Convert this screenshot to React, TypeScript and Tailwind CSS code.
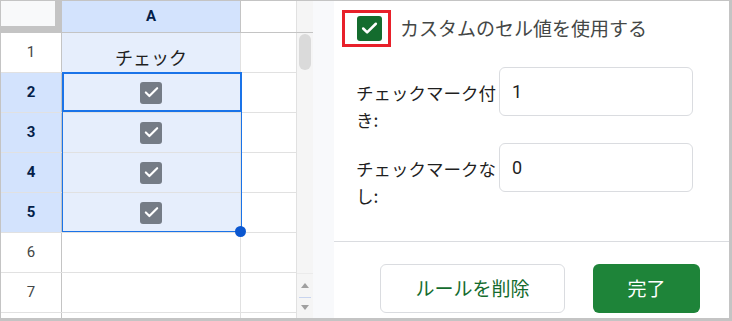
import { Check } from 'lucide-react';

const jp = { fontFamily: '"Noto Sans CJK JP", "Liberation Sans", sans-serif' };

function GridCheck() {
  return (
    <div className="w-[22px] h-[22px] rounded-[3px] bg-[#757c86] flex items-center justify-center">
      <Check className="w-[17px] h-[17px] text-white" strokeWidth={3} />
    </div>
  );
}

function SheetRow({ n, selected, children }: { n: number; selected?: boolean; children?: React.ReactNode }) {
  const inRange = n <= 5;
  return (
    <div className="flex h-[40px] border-b border-[#e1e1e1]">
      <div
        className={`w-[61px] shrink-0 border-r border-[#c4c4c4] flex items-center justify-center text-[15px] ${
          selected ? 'bg-[#d3e3fd] text-[#041e49] font-bold' : 'bg-white text-[#444746]'
        }`}
        style={{ fontFamily: 'Roboto, "Liberation Sans", sans-serif' }}
      >
        {n < 8 ? n : null}
      </div>
      <div
        className={`w-[179px] shrink-0 border-r border-[#e1e1e1] flex justify-center ${
          inRange ? 'bg-[#e6eefc]' : 'bg-white'
        } ${n === 1 ? 'items-end pb-[2px]' : 'items-center'}`}
      >
        {children}
      </div>
      <div className="w-[56px] shrink-0 border-r border-[#e1e1e1] bg-white" />
    </div>
  );
}

function Sheet() {
  return (
    <div className="w-[296px] shrink-0 flex flex-col overflow-hidden">
      <div className="flex h-[32px] shrink-0 border-b border-[#c4c4c4]">
        <div className="w-[61px] shrink-0 bg-[#c4c4c4]">
          <div className="w-[54px] h-[25px] bg-[#f8f9fa]" />
        </div>
        <div
          className="w-[179px] shrink-0 bg-[#d3e3fd] border-r border-[#c4c4c4] flex items-center justify-center text-[15px] font-bold text-[#041e49]"
          style={{ fontFamily: 'Roboto, "Liberation Sans", sans-serif' }}
        >
          A
        </div>
        <div className="w-[56px] shrink-0 bg-white border-r border-[#e1e1e1]" />
      </div>
      <div className="relative">
        <SheetRow n={1}>
          <span className="text-[18px] text-[#1f1f1f] leading-[26px]" style={jp}>
            チェック
          </span>
        </SheetRow>
        <SheetRow n={2} selected>
          <GridCheck />
        </SheetRow>
        <SheetRow n={3} selected>
          <GridCheck />
        </SheetRow>
        <SheetRow n={4} selected>
          <GridCheck />
        </SheetRow>
        <SheetRow n={5} selected>
          <GridCheck />
        </SheetRow>
        <SheetRow n={6} />
        <SheetRow n={7} />
        <SheetRow n={8} />
        {/* selection range + active cell */}
        <div className="absolute left-[61px] top-[39px] w-[180px] h-[160px] border border-[#1a73e8] pointer-events-none" />
        <div className="absolute left-[61px] top-[39px] w-[180px] h-[40px] border-2 border-[#1a73e8] pointer-events-none" />
        <div className="absolute left-[234px] top-[193px] w-[11px] h-[11px] rounded-full bg-[#0b57d0]" />
      </div>
    </div>
  );
}

function Scrollbar() {
  return (
    <div className="w-[16px] shrink-0 bg-[#f5f5f5] flex flex-col items-center">
      <div className="h-[32px] w-full border-b border-[#c4c4c4]" />
      <div className="w-[12px] h-[36px] mt-[1px] rounded-full bg-[#dadada]" />
      <div className="flex-1" />
      <div className="w-full h-[24px] border-t border-[#ebebeb] flex items-center justify-center">
        <div className="w-0 h-0 border-l-[4px] border-r-[4px] border-b-[5px] border-l-transparent border-r-transparent border-b-[#a0a0a0]" />
      </div>
      <div className="w-[12px] h-[1px] bg-[#c8d4ee]" />
      <div className="w-full h-[20px] flex items-start pt-[7px] justify-center">
        <div className="w-0 h-0 border-l-[4px] border-r-[4px] border-t-[5px] border-l-transparent border-r-transparent border-t-[#a0a0a0]" />
      </div>
    </div>
  );
}

function Field({ label1, label2, value }: { label1: string; label2: string; value: string }) {
  return (
    <div className="flex items-start">
      <div className="w-[143px] shrink-0 pt-[12px] text-[17.5px] leading-[27px] text-[#1f1f1f]" style={jp}>
        <div className="whitespace-nowrap">{label1}</div>
        <div>{label2}</div>
      </div>
      <div
        className="w-[194px] h-[49px] border border-[#dadce0] rounded-[6px] flex items-center pl-[12px] text-[18px] text-[#1f1f1f]"
        style={{ fontFamily: 'Roboto, "Liberation Sans", sans-serif' }}
      >
        {value}
      </div>
    </div>
  );
}

export default function App() {
  return (
    <div className="w-[732px] h-[321px] flex border-t border-l border-r-[3px] border-b-[3px] border-[#c4c4c4] bg-white overflow-hidden">
      <Sheet />
      <Scrollbar />
      <div className="w-[21px] shrink-0 bg-[#f8f9fb]" />
      <div className="w-[395px] shrink-0 flex flex-col bg-white">
        <div className="flex-1 overflow-hidden">
          <div className="flex items-center mt-[9px] ml-[8px]">
            <div className="w-[49px] h-[37px] border-[3px] border-[#e8202a] flex items-center justify-center pl-[5px]">
              <div className="w-[25px] h-[25px] rounded-[3px] bg-[#146c2e] flex items-center justify-center">
                <Check className="w-[19px] h-[19px] text-white" strokeWidth={3.2} />
              </div>
            </div>
            <span className="ml-[9px] text-[19px] text-[#444746]" style={jp}>
              カスタムのセル値を使用する
            </span>
          </div>
          <div className="ml-[22px] mt-[20px] flex flex-col gap-[10px]">
            <Field label1="チェックマーク付" label2="き:" value="1" />
            <Field label1="チェックマークな" label2="し:" value="0" />
          </div>
        </div>
        <div className="h-[77px] shrink-0 border-t border-[#dadce0] flex items-start pt-[22px] pl-[46px] gap-[28px]" style={jp}>
          <button className="w-[185px] h-[49px] border border-[#dadce0] rounded-[6px] bg-white text-[19px] text-[#146c2e]">
            ルールを削除
          </button>
          <button className="w-[107px] h-[49px] rounded-[6px] bg-[#1e8439] text-[19px] text-white">
            完了
          </button>
        </div>
      </div>
    </div>
  );
}
